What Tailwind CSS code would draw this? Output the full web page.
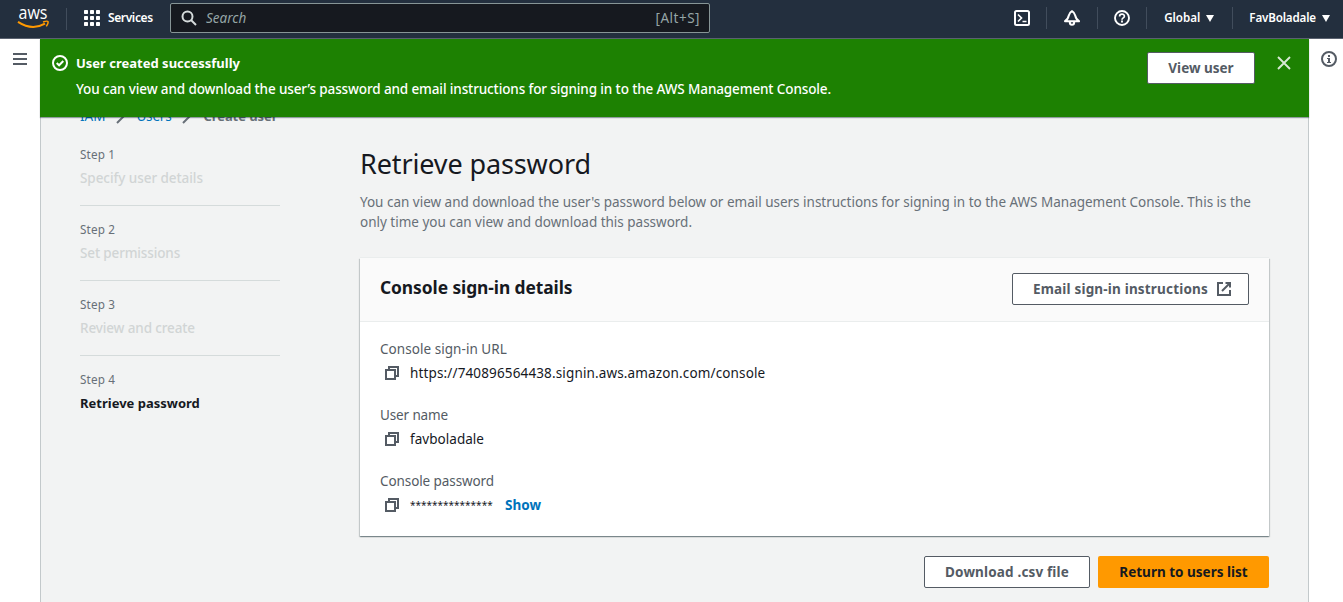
<!DOCTYPE html>
<html lang="en">
<head>
<meta charset="utf-8">
<title>Create user | IAM</title>
<script src="https://cdn.jsdelivr.net/npm/@tailwindcss/browser@4"></script>
</head>
<body class="h-[602px] overflow-hidden bg-white font-['Noto_Sans','Open_Sans',sans-serif] text-[13.5px] leading-5 text-[#16191f]">

<svg class="hidden">
  <symbol id="copy" viewBox="0 0 16 16"><g fill="none" stroke="#545b64" stroke-width="2"><path d="M2 5h9v9H2z"/><path d="M5 5V2h9v9h-3"/></g></symbol>
</svg>

<header class="flex h-[39px] items-center border-b border-[#5a6270] bg-[#232f3e] text-white">
  <svg class="ml-[17px] h-[26px] w-8 shrink-0 overflow-visible" viewBox="0 0 32 26">
    <text x="1.5" y="13.2" font-family="Open Sans" font-size="18.5" font-weight="500" textLength="29" lengthAdjust="spacingAndGlyphs" fill="#fff">aws</text>
    <path d="M1 15.8Q15 25 28 17.6" fill="none" stroke="#f90" stroke-width="2"/>
    <path d="M26 16Q30.3 14.6 31 15.6Q31.6 16.8 29.3 20.4" fill="none" stroke="#f90" stroke-width="1.5"/>
  </svg>
  <div class="ml-[17px] h-[22px] w-px bg-[#414d5c]"></div>
  <svg class="mt-[-2px] ml-[17px] h-4 w-4 shrink-0" viewBox="0 0 16 16" fill="#fff">
    <rect width="4" height="4" rx=".7"/><rect x="6" width="4" height="4" rx=".7"/><rect x="12" width="4" height="4" rx=".7"/>
    <rect y="6" width="4" height="4" rx=".7"/><rect x="6" y="6" width="4" height="4" rx=".7"/><rect x="12" y="6" width="4" height="4" rx=".7"/>
    <rect y="12" width="4" height="4" rx=".7"/><rect x="6" y="12" width="4" height="4" rx=".7"/><rect x="12" y="12" width="4" height="4" rx=".7"/>
  </svg>
  <span class="mt-[-2px] ml-2 w-[62px] shrink-0 text-[12px] font-semibold tracking-[-0.38px]">Services</span>
  <div class="mt-[-2px] flex h-[30px] w-[540px] shrink-0 items-center rounded-[2px] border border-[#879596] bg-[#16191f] pr-[9px] pl-[10px] text-[#95a5a6]">
    <svg class="h-4 w-4" viewBox="0 0 16 16" fill="none" stroke="#d5dbdb" stroke-width="2"><circle cx="6.5" cy="6.5" r="5"/><path d="M10 10l5 5"/></svg>
    <span class="ml-[9px] text-[13.5px] italic">Search</span>
    <span class="ml-auto text-[13.5px] tracking-[0.5px]">[Alt+S]</span>
  </div>
  <div class="mt-[-2px] ml-auto flex shrink-0 items-center">
    <svg class="h-4 w-4" viewBox="0 0 16 16" fill="none" stroke="#fff" stroke-width="2"><rect x="1" y="1" width="14" height="14" rx="1.5"/><path d="M4 4.5L7.5 8L4 11.5M8.5 11.5h4" stroke-width="1.7"/></svg>
    <div class="ml-4 h-[22px] w-px bg-[#414d5c]"></div>
    <svg class="ml-[17px] h-4 w-4" viewBox="0 0 16 16" fill="none" stroke="#fff" stroke-width="2"><path d="M1 11.2C3.6 9.8 4.2 7.8 4.8 5.4C5.3 3.4 6.4 2.2 8 1.2C9.6 2.2 10.7 3.4 11.2 5.4C11.8 7.8 12.4 9.8 15 11.2Z" stroke-linejoin="round"/><path d="M5.8 12C5.8 15.8 10.2 15.8 10.2 12"/></svg>
    <div class="ml-[17px] h-[22px] w-px bg-[#414d5c]"></div>
    <svg class="ml-4 h-4 w-4" viewBox="0 0 16 16" fill="none" stroke="#fff" stroke-width="1.9"><circle cx="8" cy="8" r="7"/><path d="M5.6 6.4C5.6 3.4 10.4 3.4 10.4 6.2C10.4 7.9 8 7.8 8 9.7" stroke-width="1.7"/><path d="M8 10.6v1.9" stroke-width="1.9"/></svg>
    <div class="ml-4 h-[22px] w-px bg-[#414d5c]"></div>
    <span class="ml-[17px] text-[11.6px] font-semibold">Global</span>
    <svg class="ml-[6px] h-[7px] w-[8px]" viewBox="0 0 8 7"><path d="M0 0h8L4 7z" fill="#fff"/></svg>
    <div class="ml-[18px] h-[22px] w-px bg-[#414d5c]"></div>
    <span class="ml-[16px] text-[11.6px] font-semibold tracking-[-0.15px]">FavBoladale</span>
    <svg class="mr-[13px] ml-[6px] h-[7px] w-[8px]" viewBox="0 0 8 7"><path d="M0 0h8L4 7z" fill="#fff"/></svg>
  </div>
</header>

<div class="relative flex h-[563px]">
  <nav class="w-10 shrink-0 pt-[14px] pl-[13px]">
    <svg class="h-3 w-[14px]" viewBox="0 0 14 12" fill="#545b64"><path d="M0 0h14v2H0zM0 5h14v2H0zM0 10h14v2H0z"/></svg>
  </nav>

  <main class="w-[1269px] shrink-0 border-x border-[#c3c9cb] bg-[#f2f3f3] pl-[39px]">
    <div class="flex h-[98px] items-end pb-[11px]">
      <span class="text-[#0073bb]">IAM</span>
      <svg class="mb-[2px] ml-[10px] h-[14px] w-[11px]" viewBox="0 0 11 14" fill="none" stroke="#687078" stroke-width="2"><path d="M2 1l6 6-6 6"/></svg>
      <span class="ml-[10px] tracking-[-0.2px] text-[#0073bb]">Users</span>
      <svg class="mb-[2px] ml-[10px] h-[14px] w-[11px]" viewBox="0 0 11 14" fill="none" stroke="#687078" stroke-width="2"><path d="M2 1l6 6-6 6"/></svg>
      <span class="ml-[11px] text-[13px] font-bold tracking-[-0.07px] text-[#687078]">Create user</span>
    </div>

    <div class="flex">
      <ol class="w-[200px] shrink-0 pt-[6px]">
        <li class="h-[63px] border-b border-[#d5dbdb]"><p class="text-[11.7px] leading-[22px] tracking-[0.15px] text-[#687078]">Step 1</p><p class="mt-[2px] leading-[22px] font-medium tracking-[-0.06px] text-[#d1d5d5]">Specify user details</p></li>
        <li class="mt-3 h-[63px] border-b border-[#d5dbdb]"><p class="text-[11.7px] leading-[22px] tracking-[0.15px] text-[#687078]">Step 2</p><p class="mt-[2px] leading-[22px] font-medium tracking-[-0.14px] text-[#d1d5d5]">Set permissions</p></li>
        <li class="mt-3 h-[63px] border-b border-[#d5dbdb]"><p class="text-[11.7px] leading-[22px] tracking-[0.15px] text-[#687078]">Step 3</p><p class="mt-[2px] leading-[22px] font-medium tracking-[-0.13px] text-[#d1d5d5]">Review and create</p></li>
        <li class="mt-3"><p class="text-[11.7px] leading-[22px] tracking-[0.15px] text-[#687078]">Step 4</p><p class="mt-[2px] text-[13px] leading-[22px] font-bold">Retrieve password</p></li>
      </ol>

      <section class="ml-20 w-[909px] shrink-0 pt-[9px]">
        <h1 class="text-[27px] leading-9 tracking-[-0.12px]">Retrieve password</h1>
        <p class="mt-[10px] whitespace-nowrap tracking-[-0.01px] text-[#687078]">You can view and download the user's password below or email users instructions for signing in to the AWS Management Console. This is the<br>only time you can view and download this password.</p>

        <div class="mt-[26px] h-[278px] bg-white shadow-[0_1px_1px_0_#001c244d,1px_1px_1px_0_#001c2426,-1px_1px_1px_0_#001c2426,0_-1px_0_0_#eaeded]">
          <div class="flex h-16 items-center justify-between border-b border-[#eaeded] bg-[#fafafa] px-5">
            <h2 class="mt-[-5px] text-[17.4px] font-bold tracking-[-0.08px]">Console sign-in details</h2>
            <button class="mt-[-1px] flex h-8 w-[237px] items-center rounded-[2px] border border-[#545b64] bg-white pl-[20px] font-bold tracking-[0.18px] text-[#545b64]">Email sign-in instructions
              <svg class="ml-2 h-4 w-4" viewBox="0 0 16 16" fill="none" stroke="#545b64" stroke-width="2"><path d="M7 2H2v12h12V9"/><path d="M9.5 2H14v4.5M14 2L6 10"/></svg>
            </button>
          </div>
          <dl class="flex flex-col gap-[22px] px-5 pt-[17px]">
            <div><dt class="leading-5 tracking-[0.05px] text-[#545b64]">Console sign-in URL</dt>
              <dd class="mt-1 flex h-5 items-center"><svg class="mr-[10px] ml-1 h-4 w-4"><use href="#copy"/></svg><span class="tracking-[0.14px]">https://740896564438.signin.aws.amazon.com/console</span></dd></div>
            <div><dt class="leading-5 tracking-[-0.13px] text-[#545b64]">User name</dt>
              <dd class="mt-1 flex h-5 items-center"><svg class="mr-[10px] ml-1 h-4 w-4"><use href="#copy"/></svg><span class="tracking-[0.04px]">favboladale</span></dd></div>
            <div><dt class="leading-5 tracking-[-0.09px] text-[#545b64]">Console password</dt>
              <dd class="mt-1 flex h-5 items-center"><svg class="mr-[10px] ml-1 h-4 w-4"><use href="#copy"/></svg><span class="w-[95px] text-[10px]">***************</span><a class="font-bold text-[#0073bb]">Show</a></dd></div>
          </dl>
        </div>

        <div class="mt-5 flex justify-end gap-2">
          <button class="h-8 w-[166px] rounded-[2px] border border-[#545b64] bg-white font-bold tracking-[0.16px] text-[#545b64]">Download .csv file</button>
          <button class="h-8 w-[171px] rounded-[2px] bg-[#f90] font-bold">Return to users list</button>
        </div>
      </section>
    </div>
  </main>

  <aside class="pt-3 pl-3">
    <svg class="h-4 w-4" viewBox="0 0 16 16"><circle cx="8" cy="8" r="7" fill="none" stroke="#545b64" stroke-width="2"/><path d="M7 4h2v2H7zM6 7h3v4h1v1H6v-1h1V8H6z" fill="#545b64"/></svg>
  </aside>

  <!-- Success banner, fixed over the scrolled page -->
  <div class="absolute top-0 left-10 flex h-[78px] w-[1269px] bg-[#1d8102] text-white shadow-[0_1px_1px_0_#001c2466]">
    <svg class="mt-4 ml-3 h-4 w-4 shrink-0" viewBox="0 0 16 16" fill="none" stroke="#fff" stroke-width="2"><circle cx="8" cy="8" r="7"/><path d="M4.7 8l2.4 2.3L11.3 6"/></svg>
    <div class="ml-2 pt-[14px]">
      <p class="text-[13px] font-bold">User created successfully</p>
      <p class="mt-[6px] font-medium whitespace-nowrap tracking-[-0.121px]">You can view and download the user’s password and email instructions for signing in to the AWS Management Console.</p>
    </div>
    <button class="mt-[13px] ml-auto h-8 w-[108px] shrink-0 rounded-[2px] border border-[#545b64] bg-white font-bold text-[#545b64]">View user</button>
    <svg class="mt-[17px] mr-[18px] ml-[22px] h-[14px] w-[14px]" viewBox="0 0 14 14" fill="none" stroke="#d8e9d5" stroke-width="1.9"><path d="M1 1l12 12M13 1L1 13"/></svg>
  </div>
</div>
</body>
</html>
